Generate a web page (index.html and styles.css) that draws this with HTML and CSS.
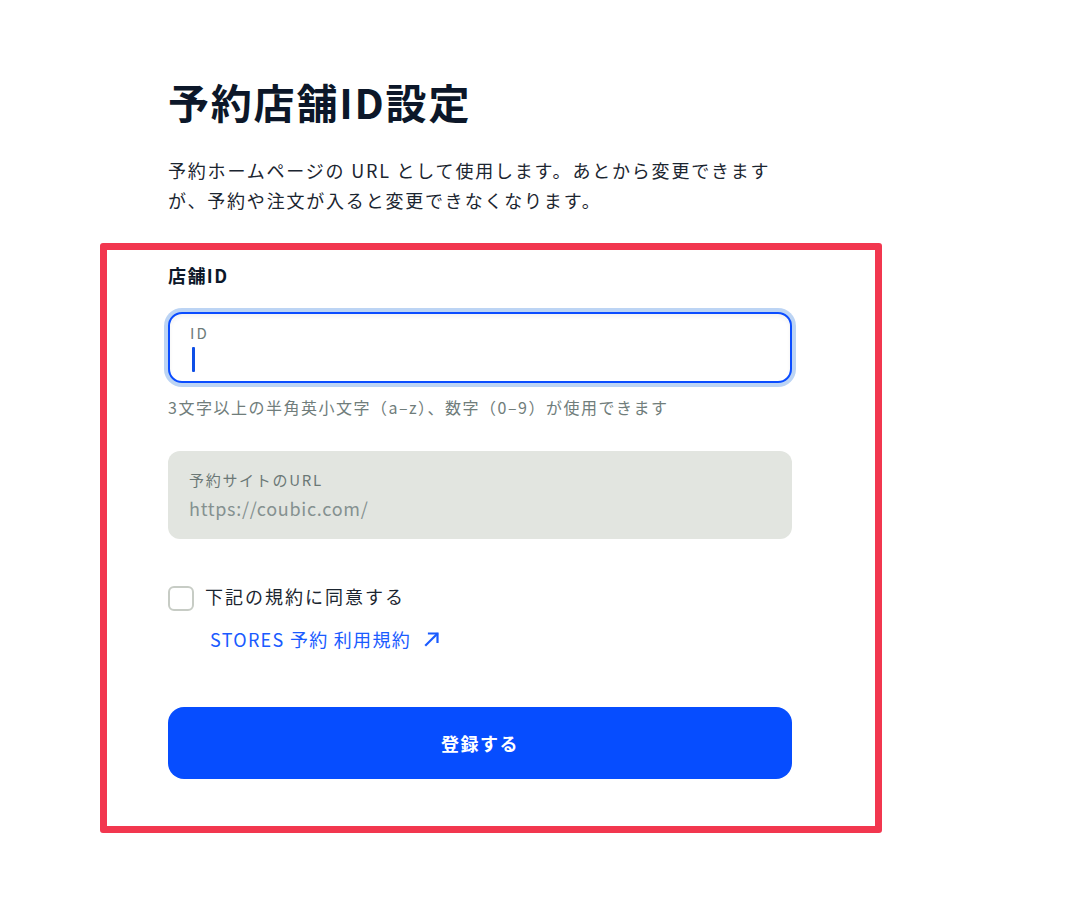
FILE: index.html
```html
<!DOCTYPE html>
<html lang="ja">
<head>
<meta charset="utf-8">
<title>予約店舗ID設定</title>
<link rel="stylesheet" href="styles.css">
</head>
<body>
<main class="page">
  <header class="header">
    <h1 class="title">予約店舗ID設定</h1>
    <p class="desc">予約ホームページの URL として使用します。あとから変更できます<br>が、予約や注文が入ると変更できなくなります。</p>
  </header>
  <section class="form">
    <div class="label">店舗ID</div>
    <div class="input">
      <div class="input-label">ID</div>
      <div class="caret"></div>
    </div>
    <p class="help">3文字以上の半角英小文字（a–z）、数字（0–9）が使用できます</p>
    <div class="url-box">
      <div class="url-label">予約サイトのURL</div>
      <div class="url-value">https://coubic.com/</div>
    </div>
    <div class="agree">
      <span class="checkbox"></span>
      <span class="agree-text">下記の規約に同意する</span>
    </div>
    <a class="terms" href="#">STORES 予約 利用規約<svg class="ext" width="18" height="18" viewBox="0 0 18 18" fill="none" stroke="currentColor" stroke-width="2.2" stroke-linecap="square"><path d="M3 15 L14 4"/><path d="M6 3.5 H14.5 V12"/></svg></a>
    <button class="submit" type="button">登録する</button>
  </section>
</main>
</body>
</html>
```
FILE: styles.css
```css
html, body {
  margin: 0;
  padding: 0;
  background: #ffffff;
}
body {
  font-family: "Noto Sans CJK JP", "Noto Sans", sans-serif;
  color: #1b2530;
}
.page {
  margin-left: 100px;
  width: 782px;
  padding-top: 73px;
}
.header {
  padding-left: 68px;
}
.title {
  margin: 0;
  font-size: 41px;
  line-height: 56px;
  font-weight: 700;
  letter-spacing: 1.8px;
  color: #0c1729;
}
.desc {
  margin: 26px 0 0;
  font-size: 18px;
  line-height: 30px;
  letter-spacing: 1.8px;
  color: #1b2530;
}
.form {
  margin-top: 28px;
  border: 7px solid #f2374f;
  border-radius: 3px;
  padding: 13px 83px 47px 61px;
  display: flex;
  flex-direction: column;
}
.label {
  font-size: 18px;
  line-height: 24px;
  font-weight: 700;
  letter-spacing: 1.4px;
  color: #0c1729;
}
.input {
  margin-top: 25px;
  height: 71px;
  box-sizing: border-box;
  border: 2px solid #0a4cff;
  border-radius: 14px;
  box-shadow: 0 0 0 4px #bcd4f4, inset 0 3px 4px rgba(0, 0, 0, 0.05);
  padding: 9px 20px 0;
  background: #fff;
}
.input-label {
  font-size: 15px;
  line-height: 20px;
  letter-spacing: 2px;
  color: #6e7b79;
}
.caret {
  margin: 4px 0 0 2px;
  width: 3px;
  height: 25px;
  border-radius: 1px;
  background: #0f4fe6;
}
.help {
  margin: 13px 0 0;
  font-size: 16px;
  line-height: 22px;
  letter-spacing: 1.5px;
  color: #707d7b;
}
.url-box {
  margin-top: 33px;
  height: 88px;
  box-sizing: border-box;
  background: #e2e5e0;
  border-radius: 12px;
  padding: 18px 21px 0;
}
.url-label {
  font-size: 15px;
  line-height: 22px;
  letter-spacing: 1.7px;
  color: #6b7876;
}
.url-value {
  margin-top: 2px;
  font-size: 18px;
  line-height: 30px;
  letter-spacing: 0.7px;
  color: #859190;
}
.agree {
  margin-top: 46px;
  display: flex;
  align-items: center;
  gap: 11px;
}
.checkbox {
  width: 26px;
  height: 25px;
  box-sizing: border-box;
  border: 2.5px solid #c7ccc5;
  border-radius: 6px;
  background: #fff;
}
.agree-text {
  font-size: 18px;
  line-height: 26px;
  letter-spacing: 2px;
  color: #1b2530;
  position: relative;
  top: -2px;
}
.terms {
  margin: 15px 0 0 42px;
  align-self: flex-start;
  display: flex;
  align-items: center;
  gap: 12px;
  font-size: 18px;
  line-height: 26px;
  letter-spacing: 1.3px;
  color: #1a5bff;
  text-decoration: none;
}
.ext {
  display: block;
}
.submit {
  margin-top: 55px;
  height: 72px;
  border: 0;
  border-radius: 16px;
  background: #064dff;
  color: #ffffff;
  font-family: "Noto Sans CJK JP", "Noto Sans", sans-serif;
  font-size: 18px;
  font-weight: 700;
  letter-spacing: 1.5px;
}
```
